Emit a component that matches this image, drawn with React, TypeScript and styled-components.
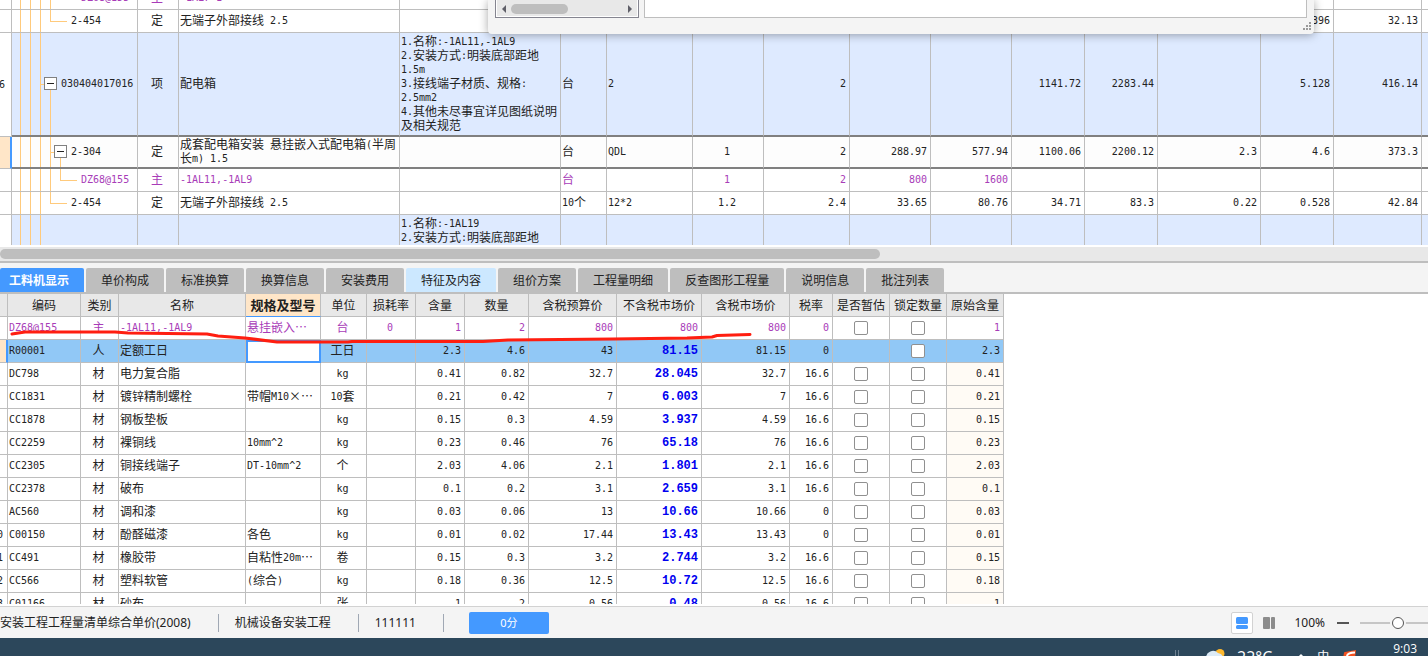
import React from 'react';
import styled, { createGlobalStyle, css } from 'styled-components';

const LINE = '#bebebe';
const GUIDE = '#ffca7c';
const PURPLE = '#a83cb8';
const BLUE = '#4499ff';

const GlobalStyle = createGlobalStyle`
  * { box-sizing: border-box; }
  body {
    margin: 0;
    overflow: hidden;
    background: #fff;
    color: #222;
    font: 12px/14px "Noto Sans CJK SC", sans-serif;
  }
`;

const Page = styled.div`
  position: relative;
  display: flex;
  flex-direction: column;
  height: 100vh;
  overflow: hidden;
`;

/* ---------- text with half-width latin runs ---------- */

const Half = styled.span<{ $bold?: boolean }>`
  font-family: ${(p) => (p.$bold ? "'Liberation Mono'" : "'DejaVu Sans Mono'")}, monospace;
  font-size: ${(p) => (p.$bold ? 12 : 10)}px;
  line-height: 0;
  vertical-align: 1px;
`;

function Grid({ children, bold }: { children?: string; bold?: boolean }) {
  if (!children) return null;
  return (
    <>
      {children.split(/([\x20-\x7e]+)/).map((run, i) =>
        i % 2 ? (
          <Half key={i} $bold={bold}>
            {run}
          </Half>
        ) : (
          run
        )
      )}
    </>
  );
}

/* ---------- shared table ---------- */

const Table = styled.table<{ $width: string }>`
  width: ${(p) => p.$width};
  table-layout: fixed;
  border-collapse: separate;
  border-spacing: 0;
`;

const Col = styled.col<{ $w?: number }>`
  width: ${(p) => (p.$w ? `${p.$w}px` : 'auto')};
`;

type Align = 'left' | 'center' | 'right';

const Cell = styled.td<{ $align?: Align }>`
  padding: 0 3px 2px 1px;
  border-right: 1px solid ${LINE};
  border-bottom: 1px solid ${LINE};
  text-align: ${(p) => p.$align ?? 'left'};
  vertical-align: middle;
  white-space: pre;
  overflow: hidden;
`;

/* ---------- bill of quantities ---------- */

const BillPane = styled.section`
  flex: 0 0 245px;
  overflow: hidden;
`;

const BillTable = styled(Table)`
  margin-top: -13px;
`;

type Kind = 'plain' | 'item' | 'current' | 'material';

const BillRow = styled.tr<{ $kind: Kind; $h: number; $thick?: boolean }>`
  height: ${(p) => p.$h}px;
  color: ${(p) => (p.$kind === 'material' ? PURPLE : 'inherit')};
  background: ${(p) =>
    p.$kind === 'item' ? '#deeaff' : p.$kind === 'current' ? '#fdfdfd' : '#fff'};
  ${Cell} {
    ${(p) => p.$thick && css`border-bottom: 2px solid #808080;`}
  }
  ${Cell}:last-child {
    border-right: 0;
  }
`;

const HeadCell = styled(Cell)<{ $current?: boolean }>`
  && {
    padding: 0 0 2px;
    background-color: ${(p) => (p.$current ? '#ffe6c8' : '#fff')};
    border-bottom: 1px solid ${LINE};
    ${(p) => p.$current && css`border-right: 2px solid ${BLUE};`}
  }
`;

const RowNo = styled.div<{ $shift: number }>`
  margin-left: -${(p) => p.$shift}px;
`;

const line = (x: number, y: string, w: string, h: string) =>
  `linear-gradient(${GUIDE}, ${GUIDE}) ${x}px ${y} / ${w} ${h} no-repeat`;
const full = (x: number) => line(x, '0', '1px', '100%');
const upper = (x: number) => line(x, '0', '1px', '50%');
const lower = (x: number) => line(x, '100%', '1px', '50%');
const branch = (x: number, w: number) => line(x, '50%', `${w}px`, '1px');

const trunk = [full(8), full(18), full(28)];
const guides = {
  item: [...trunk, branch(28, 5), lower(38)],
  norm: [...trunk, full(38), branch(38, 5), lower(48)],
  part: [...trunk, full(38), upper(48), branch(48, 17)],
  last: [...trunk, upper(38), branch(38, 17)],
  trunk,
};

const CodeCell = styled(Cell)<{ $guide: keyof typeof guides; $indent: number }>`
  && {
    padding-left: ${(p) => p.$indent}px;
    background: ${(p) => guides[p.$guide].join(', ')};
  }
`;

const CodeBox = styled.div`
  display: flex;
  align-items: center;
  gap: 4px;
`;

const Toggle = styled.button`
  display: flex;
  align-items: center;
  justify-content: center;
  width: 13px;
  height: 13px;
  padding: 0;
  border: 1px solid #808080;
  background: #fff;
  &::before {
    content: '';
    width: 7px;
    height: 1px;
    background: #222;
  }
`;

interface Bill {
  kind: Kind;
  h: number;
  thick?: boolean;
  head?: string;
  guide: keyof typeof guides;
  indent: number;
  toggle?: boolean;
  code: string;
  cells: string[];
}

const BILL_COLS = [12, 126, 41, 221, 161, 46, 86, 71, 86, 81, 81, 73, 73, 103, 73, 88, 0];
const BILL_ALIGN: Align[] = [
  'center', 'left', 'left', 'left', 'left', 'center',
  'right', 'right', 'right', 'right', 'right', 'right', 'right', 'right', 'left',
];

const BILLS: Bill[] = [
  {
    kind: 'material', h: 23, guide: 'part', indent: 69, code: 'DZ68@155',
    cells: ['主', '-1AL7-1', '', '', '', '', '', '', '', '', '', '', '', '', ''],
  },
  {
    kind: 'plain', h: 23, guide: 'last', indent: 59, code: '2-454',
    cells: ['定', '无端子外部接线 2.5', '', '', '', '', '', '', '', '', '', '', '0.396', '32.13', ''],
  },
  {
    kind: 'item', h: 104, thick: true, head: '6', guide: 'item', indent: 32, toggle: true, code: '030404017016',
    cells: [
      '项', '配电箱',
      '1.名称:-1AL11,-1AL9\n2.安装方式:明装底部距地\n1.5m\n3.接线端子材质、规格:\n2.5mm2\n4.其他未尽事宜详见图纸说明\n及相关规范',
      '台', '2', '', '2', '', '', '1141.72', '2283.44', '', '5.128', '416.14', '',
    ],
  },
  {
    kind: 'current', h: 32, thick: true, guide: 'norm', indent: 42, toggle: true, code: '2-304',
    cells: [
      '定', '成套配电箱安装 悬挂嵌入式配电箱(半周\n长m) 1.5', '', '台', 'QDL', '1', '2',
      '288.97', '577.94', '1100.06', '2200.12', '2.3', '4.6', '373.3', '',
    ],
  },
  {
    kind: 'material', h: 23, guide: 'part', indent: 69, code: 'DZ68@155',
    cells: ['主', '-1AL11,-1AL9', '', '台', '', '1', '2', '800', '1600', '', '', '', '', '', ''],
  },
  {
    kind: 'plain', h: 23, guide: 'last', indent: 59, code: '2-454',
    cells: [
      '定', '无端子外部接线 2.5', '', '10个', '12*2', '1.2', '2.4',
      '33.65', '80.76', '34.71', '83.3', '0.22', '0.528', '42.84', '',
    ],
  },
  {
    kind: 'item', h: 32, guide: 'trunk', indent: 59, code: '',
    cells: ['', '', '1.名称:-1AL19\n2.安装方式:明装底部距地', '', '', '', '', '', '', '', '', '', '', '', ''],
  },
];

function BillGrid() {
  return (
    <BillPane>
      <BillTable $width="100%">
        <colgroup>
          {BILL_COLS.map((w, i) => (
            <Col key={i} $w={w} />
          ))}
        </colgroup>
        <tbody>
          {BILLS.map((b, r) => (
            <BillRow key={r} $kind={b.kind} $h={b.h} $thick={b.thick}>
              <HeadCell $current={b.kind === 'current'}>
                <RowNo $shift={1}>
                  <Grid>{b.head}</Grid>
                </RowNo>
              </HeadCell>
              <CodeCell $guide={b.guide} $indent={b.indent}>
                <CodeBox>
                  {b.toggle && <Toggle aria-label={`Collapse ${b.code}`} />}
                  <span>
                    <Grid>{b.code}</Grid>
                  </span>
                </CodeBox>
              </CodeCell>
              {b.cells.map((c, i) => (
                <Cell key={i} $align={BILL_ALIGN[i]}>
                  <Grid>{c}</Grid>
                </Cell>
              ))}
            </BillRow>
          ))}
        </tbody>
      </BillTable>
    </BillPane>
  );
}

const HScroll = styled.div`
  flex: none;
  margin-top: 2px;
  padding: 2px 0;
  background: #e8e8e8;
`;

const HThumb = styled.div`
  width: 880px;
  max-width: 80%;
  height: 10px;
  border-radius: 5px;
  background: ${LINE};
`;

/* ---------- floating dialog edge ---------- */

const Dialog = styled.div`
  position: absolute;
  top: 0;
  left: 488px;
  display: flex;
  gap: 5px;
  width: 826px;
  height: 34px;
  padding: 0 7px 16px;
  border-radius: 0 0 4px 4px;
  background: #f4f4f4;
  box-shadow: 0 1px 10px rgba(0, 0, 0, 0.35);
`;

const ListBox = styled.div`
  display: flex;
  width: 144px;
  padding: 0 1px 1px;
  border: solid #858590;
  border-width: 0 1px 1px;
  background: #fff;
`;

const MiniScroll = styled.div`
  flex: 1;
  display: flex;
  align-items: center;
  gap: 4px;
  padding: 2px 4px 0;
  background: #e8e8e8;
`;

const MiniThumb = styled.div`
  width: 57px;
  height: 10px;
  margin-right: auto;
  border-radius: 5px;
  background: ${LINE};
`;

const Editor = styled.div`
  flex: 1;
  border: solid ${LINE};
  border-width: 0 1px 1px;
  background: #fff;
`;

const Grip = styled.svg`
  position: absolute;
  right: 3px;
  bottom: 4px;
`;

const Arrow = styled.svg`
  flex: none;
`;

function DialogEdge() {
  return (
    <Dialog>
      <ListBox>
        <MiniScroll>
          <Arrow width="6" height="8" viewBox="0 0 6 8" fill="#5f5f68">
            <path d="M5 0v8L1 4z" />
          </Arrow>
          <MiniThumb />
          <Arrow width="6" height="8" viewBox="0 0 6 8" fill="#5f5f68">
            <path d="M1 0v8l4-4z" />
          </Arrow>
        </MiniScroll>
      </ListBox>
      <Editor />
      <Grip width="8" height="8" viewBox="0 0 8 8" fill="#9a9a9a">
        <path d="M6 0h2v2h-2zM3 3h2v2h-2zM6 3h2v2h-2zM0 6h2v2h-2zM3 6h2v2h-2zM6 6h2v2h-2z" />
      </Grip>
    </Dialog>
  );
}

/* ---------- tabs ---------- */

const Tabs = styled.nav`
  flex: none;
  display: flex;
  gap: 2px;
  padding-top: 5px;
  border-top: 2px solid ${LINE};
  border-bottom: 2px solid ${LINE};
  background: #f4f4f4;
`;

const Tab = styled.button<{ $tone?: 'active' | 'hint' }>`
  height: 24px;
  padding: 0 15px;
  border: 0;
  border-radius: 2px 2px 0 0;
  background: ${(p) => (p.$tone === 'active' ? BLUE : p.$tone === 'hint' ? '#cce8ff' : LINE)};
  color: ${(p) => (p.$tone === 'active' ? '#fff' : '#222')};
  font: ${(p) => (p.$tone === 'active' ? 700 : 400)} 12px/24px 'Noto Sans CJK SC', sans-serif;
  white-space: nowrap;
  &:first-child {
    padding-left: 9px;
  }
`;

const TABS: [string, ('active' | 'hint')?][] = [
  ['工料机显示', 'active'],
  ['单价构成'],
  ['标准换算'],
  ['换算信息'],
  ['安装费用'],
  ['特征及内容', 'hint'],
  ['组价方案'],
  ['工程量明细'],
  ['反查图形工程量'],
  ['说明信息'],
  ['批注列表'],
];

/* ---------- resources ---------- */

const ResourcePane = styled.section`
  position: relative;
  flex: 1;
  min-height: 0;
  margin-bottom: 2px;
  overflow: hidden;
`;

const Th = styled.th<{ $current?: boolean }>`
  height: 23px;
  padding: 0;
  border-right: 1px solid ${LINE};
  border-bottom: 1px solid ${(p) => (p.$current ? BLUE : LINE)};
  background: ${(p) => (p.$current ? '#ffe6c8' : '#e8e8e8')};
  font-weight: ${(p) => (p.$current ? 700 : 400)};
  font-size: ${(p) => (p.$current ? 13 : 12)}px;
  white-space: nowrap;
`;

const ResRow = styled.tr<{ $tone?: 'material' | 'selected' }>`
  height: 23px;
  color: ${(p) => (p.$tone === 'material' ? PURPLE : 'inherit')};
  background: ${(p) => (p.$tone === 'selected' ? '#91c8f6' : '#fff')};
  ${Cell}:last-child {
    background: ${(p) => (p.$tone ? 'transparent' : '#fffbf5')};
  }
`;

const ResHead = styled(Cell)<{ $current?: boolean }>`
  padding: 0 0 2px;
  background: ${(p) => (p.$current ? '#ffe6c8' : '#fff')};
  ${(p) => p.$current && css`border-right: 2px solid ${BLUE};`}
`;

const EditCell = styled(Cell)`
  padding: 0;
  border: 0;
`;

const CellInput = styled.input`
  display: block;
  width: 100%;
  height: 23px;
  padding: 0 2px;
  border: 2px solid ${BLUE};
  background: #fff;
  font: inherit;
  outline: none;
`;

const Price = styled(Cell)`
  color: #0000f0;
  font-weight: 700;
`;

const CheckCell = styled(Cell)`
  padding: 0;
`;

const Check = styled.input`
  appearance: none;
  display: block;
  width: 14px;
  height: 14px;
  margin: 0 auto;
  border: 1px solid #909090;
  border-radius: 2px;
  background: #fff;
`;

const RES_COLS = [8, 73, 38, 127, 75, 46, 49, 49, 64, 88, 85, 88, 43, 57, 57, 57];
const RES_HEADS = [
  '', '编码', '类别', '名称', '规格及型号', '单位', '损耗率', '含量', '数量',
  '含税预算价', '不含税市场价', '含税市场价', '税率', '是否暂估', '锁定数量', '原始含量',
];
const RES_ALIGN: Align[] = [
  'left', 'center', 'left', 'left', 'center', 'center',
  'right', 'right', 'right', 'right', 'right', 'right',
];

const RES: string[][] = [
  ['', 'DZ68@155', '主', '-1AL11,-1AL9', '悬挂嵌入⋯', '台', '0', '1', '2', '800', '800', '800', '0', '1'],
  ['', 'R00001', '人', '定额工日', '', '工日', '', '2.3', '4.6', '43', '81.15', '81.15', '0', '2.3'],
  ['', 'DC798', '材', '电力复合脂', '', 'kg', '', '0.41', '0.82', '32.7', '28.045', '32.7', '16.6', '0.41'],
  ['', 'CC1831', '材', '镀锌精制螺栓', '带帽M10×⋯', '10套', '', '0.21', '0.42', '7', '6.003', '7', '16.6', '0.21'],
  ['', 'CC1878', '材', '钢板垫板', '', 'kg', '', '0.15', '0.3', '4.59', '3.937', '4.59', '16.6', '0.15'],
  ['', 'CC2259', '材', '裸铜线', '10mm^2', 'kg', '', '0.23', '0.46', '76', '65.18', '76', '16.6', '0.23'],
  ['', 'CC2305', '材', '铜接线端子', 'DT-10mm^2', '个', '', '2.03', '4.06', '2.1', '1.801', '2.1', '16.6', '2.03'],
  ['', 'CC2378', '材', '破布', '', 'kg', '', '0.1', '0.2', '3.1', '2.659', '3.1', '16.6', '0.1'],
  ['', 'AC560', '材', '调和漆', '', 'kg', '', '0.03', '0.06', '13', '10.66', '10.66', '0', '0.03'],
  ['0', 'C00150', '材', '酚醛磁漆', '各色', 'kg', '', '0.01', '0.02', '17.44', '13.43', '13.43', '0', '0.01'],
  ['1', 'CC491', '材', '橡胶带', '自粘性20m⋯', '卷', '', '0.15', '0.3', '3.2', '2.744', '3.2', '16.6', '0.15'],
  ['2', 'CC566', '材', '塑料软管', '(综合)', 'kg', '', '0.18', '0.36', '12.5', '10.72', '12.5', '16.6', '0.18'],
  ['3', 'C01166', '材', '砂布', '', '张', '', '1', '2', '0.56', '0.48', '0.56', '16.6', '1'],
];

const Stroke = styled.svg`
  position: absolute;
  top: 0;
  left: 0;
  pointer-events: none;
`;

function ResourceGrid() {
  return (
    <ResourcePane>
      <Table $width="1004px">
        <colgroup>
          {RES_COLS.map((w, i) => (
            <Col key={i} $w={w} />
          ))}
        </colgroup>
        <thead>
          <tr>
            {RES_HEADS.map((h, i) => (
              <Th key={i} $current={i === 4}>
                {h}
              </Th>
            ))}
          </tr>
        </thead>
        <tbody>
          {RES.map(([no, ...row], r) => (
            <ResRow key={row[0]} $tone={r === 0 ? 'material' : r === 1 ? 'selected' : undefined}>
              <ResHead $current={r === 1}>
                <RowNo $shift={3}>
                  <Grid>{no}</Grid>
                </RowNo>
              </ResHead>
              {row.slice(0, 12).map((c, i) =>
                r === 1 && i === 3 ? (
                  <EditCell key={i}>
                    <CellInput aria-label="规格及型号" />
                  </EditCell>
                ) : i === 9 && r > 0 ? (
                  <Price key={i} $align="right">
                    <Grid bold>{c}</Grid>
                  </Price>
                ) : (
                  <Cell key={i} $align={RES_ALIGN[i]}>
                    <Grid>{c}</Grid>
                  </Cell>
                )
              )}
              <CheckCell>
                {r !== 1 && <Check type="checkbox" aria-label={`是否暂估 ${row[0]}`} />}
              </CheckCell>
              <CheckCell>
                <Check type="checkbox" aria-label={`锁定数量 ${row[0]}`} />
              </CheckCell>
              <Cell $align="right">
                <Grid>{row[12]}</Grid>
              </Cell>
            </ResRow>
          ))}
        </tbody>
      </Table>
      <Stroke width="760" height="60" viewBox="0 294 760 60" fill="none">
        <path
          d="M12 334 25 332H115L128 333 207 334 218 336 245 338 277 342H348L352 341.500H483L508 340 613 339 687 338 712 337 717 335.500 750 334.500"
          stroke="#ff1e10"
          strokeWidth="3"
          strokeLinecap="round"
          strokeLinejoin="round"
        />
      </Stroke>
    </ResourcePane>
  );
}

/* ---------- status bar ---------- */

const Status = styled.footer`
  flex: none;
  display: flex;
  align-items: center;
  height: 32px;
  border-top: 1px solid #d2d2d2;
  background: #f4f4f4;
  font-family: 'Noto Sans', 'Noto Sans CJK SC', sans-serif;
  white-space: nowrap;
`;

const StatusItem = styled.span`
  padding: 2px 27px 2px 16px;
  border-right: 1px solid #a0a8b4;
  &:first-child {
    padding-left: 0;
  }
`;

const Score = styled.button`
  width: 80px;
  height: 22px;
  margin: 0 auto 0 25px;
  padding: 0;
  border: 0;
  border-radius: 2px;
  background: ${BLUE};
  color: #fff;
  font: 11px/22px 'Noto Sans', 'Noto Sans CJK SC', sans-serif;
`;

const ViewButton = styled.button<{ $on?: boolean }>`
  display: flex;
  align-items: center;
  justify-content: center;
  width: 22px;
  height: 22px;
  margin-right: 5px;
  padding: 0;
  border: 1px solid ${(p) => (p.$on ? '#d2d2d2' : 'transparent')};
  border-radius: 2px;
  background: ${(p) => (p.$on ? '#fff' : 'transparent')};
`;

const Percent = styled.span`
  margin: 0 12px 0 9px;
`;

const ZoomOut = styled.button`
  width: 12px;
  height: 12px;
  margin-right: 11px;
  padding: 5px 0;
  border: 0;
  background: #555 content-box;
`;

const SliderClip = styled.div`
  width: 68px;
  overflow: hidden;
`;

const Slider = styled.input`
  appearance: none;
  display: block;
  width: 76px;
  height: 18px;
  margin: 0;
  background: transparent;
  &::-webkit-slider-runnable-track {
    height: 2px;
    background: #c6c6c6;
  }
  &::-webkit-slider-thumb {
    appearance: none;
    width: 12px;
    height: 12px;
    margin-top: -5px;
    border: 1px solid #555;
    border-radius: 6px;
    background: #fff;
    box-shadow: 0 0 0 2px #f4f4f4;
  }
`;

function StatusBar() {
  return (
    <Status>
      <StatusItem>安装工程工程量清单综合单价(2008)</StatusItem>
      <StatusItem>机械设备安装工程</StatusItem>
      <StatusItem>111111</StatusItem>
      <Score>0分</Score>
      <ViewButton $on aria-label="Rows view">
        <svg width="12" height="12" viewBox="0 0 12 12" fill={BLUE}>
          <rect width="12" height="7" rx="1.5" />
          <rect y="8" width="12" height="4" rx="1.5" />
        </svg>
      </ViewButton>
      <ViewButton aria-label="Columns view">
        <svg width="12" height="12" viewBox="0 0 12 12" fill="#8c8c8c">
          <rect width="7" height="12" rx="1" />
          <rect x="8" width="4" height="12" rx="1" />
        </svg>
      </ViewButton>
      <Percent>100%</Percent>
      <ZoomOut aria-label="Zoom out" />
      <SliderClip>
        <Slider type="range" aria-label="Zoom" defaultValue={50} />
      </SliderClip>
    </Status>
  );
}

/* ---------- taskbar ---------- */

const Taskbar = styled.div`
  flex: none;
  display: flex;
  align-items: flex-start;
  justify-content: flex-end;
  height: 18px;
  padding-right: 11px;
  overflow: hidden;
  background: #2c475b;
  color: #fff;
  font-family: 'Open Sans', 'Noto Sans CJK SC', sans-serif;
`;

const Tray = styled.svg`
  flex: none;
`;

const Temp = styled.span`
  margin: 9px 25px 0 12px;
  font-size: 16px;
  line-height: 20px;
`;

const Ime = styled.span`
  margin: 10px 14px 0 12px;
  line-height: 18px;
`;

const Clock = styled.time`
  margin: 3px 0 0 36px;
  line-height: 16px;
`;

function TaskbarStrip() {
  return (
    <Taskbar>
      <Tray width="52" height="18" viewBox="0 0 52 18">
        <path d="M2.500 12v6M5.500 12v6" stroke="#6d8090" />
        <circle cx="47" cy="15.500" r="4.500" fill="#ffb92e" />
        <path d="M33 20a7 7 0 0 1 12-5q5 1 5 5z" fill="#dcebf7" />
      </Tray>
      <Temp>22°C</Temp>
      <Tray width="8" height="18" viewBox="0 0 8 18" fill="none" stroke="#fff" strokeWidth="1.500">
        <path d="M0 21 4 17l4 4" />
      </Tray>
      <Ime>中</Ime>
      <Tray width="14" height="18" viewBox="0 0 14 18">
        <path d="M1 15q0-1 1-1l11-2-1 8H0z" fill="#f4511e" />
        <path d="M12 14.500q-8 0-8 4" fill="none" stroke="#fff" strokeWidth="2" />
      </Tray>
      <Clock>9:03</Clock>
    </Taskbar>
  );
}

export default function App() {
  return (
    <Page lang="zh-CN">
      <GlobalStyle />
      <BillGrid />
      <HScroll>
        <HThumb />
      </HScroll>
      <Tabs>
        {TABS.map(([label, tone]) => (
          <Tab key={label} $tone={tone}>
            {label}
          </Tab>
        ))}
      </Tabs>
      <ResourceGrid />
      <StatusBar />
      <TaskbarStrip />
      <DialogEdge />
    </Page>
  );
}
